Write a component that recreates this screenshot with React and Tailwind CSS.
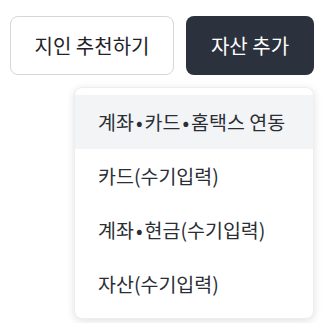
import React from "react";

const items = [
  ["계좌", "카드", "홈택스 연동"],
  ["카드(수기입력)"],
  ["계좌", "현금(수기입력)"],
  ["자산(수기입력)"],
];

export default function App() {
  return (
    <div
      className="w-[323px] h-[323px] bg-white pt-4 pl-[10px]"
      style={{ fontFamily: '"Noto Sans CJK KR", "Noto Sans", sans-serif' }}
    >
      <div className="relative w-[304px]">
        <div className="flex gap-3">
          <button className="w-[164px] h-[59px] rounded-lg border border-[#d4d6da] bg-white text-[20px] text-[#1f2329]">
            지인 추천하기
          </button>
          <button className="w-[128px] h-[59px] rounded-lg bg-[#2b313d] text-[20px] text-white">
            자산 추가
          </button>
        </div>
        <div className="absolute right-0 top-[71px] w-[240px] rounded-lg border border-[#eceef0] bg-white py-[7px] shadow-[0_2px_8px_rgba(0,0,0,0.12)]">
          {items.map((parts, i) => (
            <div
              key={i}
              className={`h-[54px] flex items-center pl-[23px] text-[19.5px] text-[#2a2e35] whitespace-nowrap ${
                i === 0 ? "bg-[#f3f4f6]" : ""
              }`}
            >
              {parts.map((p, j) => (
                <React.Fragment key={j}>
                  {j > 0 && <span className="mx-[2px]">•</span>}
                  <span className={j === 2 ? "whitespace-pre" : ""}>{p}</span>
                </React.Fragment>
              ))}
            </div>
          ))}
        </div>
      </div>
    </div>
  );
}
